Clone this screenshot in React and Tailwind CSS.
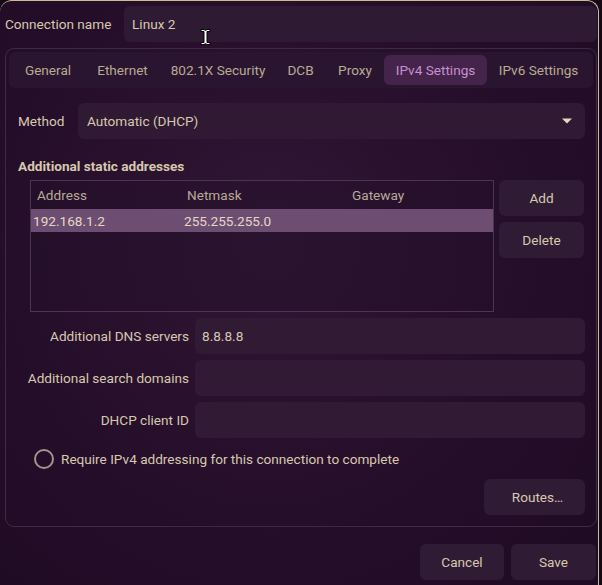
import { useState } from "react";

const font = { fontFamily: "Roboto, Lato, sans-serif" };

const tabs = [
    { label: "General", w: "w-[72px]" },
    { label: "Ethernet", w: "w-[77px]" },
    { label: "802.1X Security", w: "w-[114px]" },
    { label: "DCB", w: "w-[51px]" },
    { label: "Proxy", w: "w-[58px]" },
    { label: "IPv4 Settings", w: "w-[103px]", active: true },
    { label: "IPv6 Settings", w: "w-[103px]" },
];

function Field({ label, value }) {
    return (
        <div className="flex items-center h-[36px]">
            <div className="w-[171px] text-right whitespace-nowrap text-[#d6c9ae] pt-[1px]">{label}</div>
            <div className="ml-[6px] flex-1 h-full rounded-[6px] bg-[#301a34] flex items-center px-[7px] pt-[1px] text-[#d6c9ae]">
                {value}
            </div>
        </div>
    );
}

function Button({ children, className = "" }) {
    return (
        <div className={`h-[36px] rounded-[6px] bg-[#301b34] flex items-center justify-center pt-[1px] text-[#d6c9ae] ${className}`}>
            {children}
        </div>
    );
}

export default function App() {
    const [tab] = useState("IPv4 Settings");

    return (
        <div className="relative w-[602px] h-[585px] overflow-hidden bg-[#150817] text-[13.6px]" style={font}>
            <div className="w-[599px] h-[600px] rounded-t-[12px] border-t border-r border-[#cbbd8e] bg-[radial-gradient(ellipse_at_45%_40%,#301735_0%,#240d29_60%,#1f0b23_100%)]">

                {/* Connection name */}
                <div className="flex items-center pt-[5px] pl-[5px] pr-[1px]">
                    <div className="w-[119px] whitespace-nowrap pt-[1px] text-[#d6c9ae]">Connection name</div>
                    <div className="flex-1 h-[36px] rounded-[6px] bg-[#2e1a33] flex items-center px-[8px] pt-[1px] text-[#d6c9ae]">
                        Linux 2
                    </div>
                </div>

                {/* Notebook */}
                <div className="mt-[6px] ml-[5px] w-[592px] h-[479px] rounded-[9px] border border-[#3e2a42] p-[3px]">
                    <div className="h-[36px] rounded-[6px] bg-[#2a1530] flex items-center pl-[3px]">
                        {tabs.map((t) => (
                            <div
                                key={t.label}
                                className={`${t.w} h-[30px] rounded-[6px] flex items-center justify-center pt-[1px] whitespace-nowrap ${
                                    t.label === tab ? "bg-[#44244b] text-[#c890d2]" : "text-[#b9aa93]"
                                }`}
                            >
                                {t.label}
                            </div>
                        ))}
                    </div>

                    <div className="pl-[9px] pr-[8px]">
                        {/* Method */}
                        <div className="mt-[15px] flex items-center h-[36px]">
                            <div className="w-[60px] pt-[1px] text-[#d6c9ae]">Method</div>
                            <div className="flex-1 h-full rounded-[6px] bg-[#2f1933] flex items-center justify-between px-[9px] text-[#d6c9ae]">
                                <span className="pt-[1px]">Automatic (DHCP)</span>
                                <svg width="12" height="8" viewBox="0 0 12 8" className="mr-[3px]">
                                    <path d="M1 1.5h10L6 6.5z" fill="#e4dac4" />
                                </svg>
                            </div>
                        </div>

                        <div className="mt-[17px] h-[20px] flex items-center pt-[1px] font-bold text-[#d6c9ae]">Additional static addresses</div>

                        {/* Addresses table + buttons */}
                        <div className="mt-[4px] flex pl-[12px] gap-[5px]">
                            <div className="w-[464px] h-[132px] border border-[#4a3650] bg-[#230e28]/40">
                                <div className="h-[28px] flex items-center pt-[1px] text-[#b7aa97]">
                                    <div className="w-[156px] pl-[6px]">Address</div>
                                    <div className="w-[165px]">Netmask</div>
                                    <div>Gateway</div>
                                </div>
                                <div className="h-[23px] bg-[#6d4e72] flex items-center pt-[1px] text-[#e2d8c4]">
                                    <div className="w-[153px] pl-[2px]">192.168.1.2</div>
                                    <div>255.255.255.0</div>
                                </div>
                            </div>
                            <div className="w-[85px] flex flex-col gap-[6px]">
                                <Button>Add</Button>
                                <Button>Delete</Button>
                            </div>
                        </div>

                        {/* Fields */}
                        <div className="mt-[6px] flex flex-col gap-[6px]">
                            <Field label="Additional DNS servers" value="8.8.8.8" />
                            <Field label="Additional search domains" value="" />
                            <Field label="DHCP client ID" value="" />
                        </div>

                        <div className="mt-[11px] ml-[16px] flex items-center h-[20px] gap-[7px] text-[#d6c9ae]">
                            <div className="w-[20px] h-[20px] rounded-full border-2 border-[#9f958c]" />
                            <span className="pt-[1px]">Require IPv4 addressing for this connection to complete</span>
                        </div>

                        <div className="mt-[10px] flex justify-end">
                            <Button className="w-[101px] pl-[6px]">Routes…</Button>
                        </div>
                    </div>
                </div>

                {/* Dialog buttons */}
                <div className="mt-[17px] flex justify-end gap-[7px] pr-[2px]">
                    <Button className="w-[84px]">Cancel</Button>
                    <Button className="w-[85px]">Save</Button>
                </div>
            </div>

            {/* I-beam cursor */}
            <svg className="absolute left-[200px] top-[28px]" width="11" height="18" viewBox="0 0 11 18">
                <path
                    d="M1 1.5h3l1.5 1 1.5-1h3v2H7v11h3v2H7l-1.5-1-1.5 1H1v-2h3v-11H1z"
                    fill="#ffffff"
                    stroke="#000000"
                    strokeWidth="1"
                />
            </svg>
        </div>
    );
}
